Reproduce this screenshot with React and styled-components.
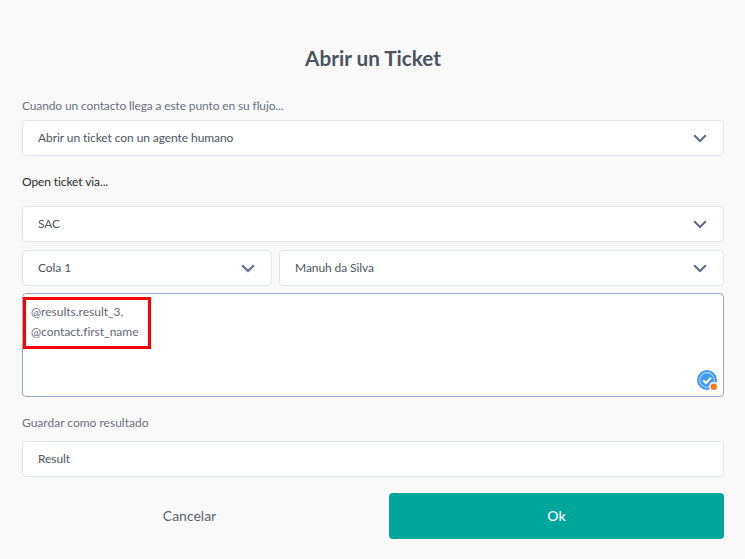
import React from 'react';
import styled, {createGlobalStyle} from 'styled-components';

const GlobalStyle = createGlobalStyle`
  html, body {
    margin: 0;
    background: #f9f9f9;
    font-family: Lato, "Liberation Sans", sans-serif;
    font-variant-ligatures: none;
  }
`;

function Chevron() {
  return (
    <ChevronIcon width="14" height="9" viewBox="0 0 14 9">
      <path d="M1.2 1.2 L7 7 L12.8 1.2" fill="none" stroke="#5f6b8a" strokeWidth="2.1" />
    </ChevronIcon>
  );
}

function Select({value, width}) {
  return (
    <Box $width={width}>
      <BoxText>{value}</BoxText>
      <Chevron />
    </Box>
  );
}

function CheckBadge() {
  return (
    <Badge width="22" height="22" viewBox="0 0 22 22">
      <circle cx="11" cy="11" r="10" fill="#3f9af0" />
      <circle cx="11" cy="11" r="7.4" fill="none" stroke="#a9d3fa" strokeWidth="1.1" />
      <path d="M7.2 11.2 L10 14 L15 8.6" fill="none" stroke="#fff" strokeWidth="2" />
      <circle cx="17.5" cy="17.5" r="4.4" fill="#fff" />
      <circle cx="17.8" cy="17.8" r="3.2" fill="#f5791f" />
    </Badge>
  );
}

export default function App() {
  return (
    <Page>
      <GlobalStyle />
      <Title>Abrir un Ticket</Title>

      <FieldLabel>Cuando un contacto llega a este punto en su flujo...</FieldLabel>
      <Select value="Abrir un ticket con un agente humano" />

      <ViaLabel>Open ticket via...</ViaLabel>
      <Select value="SAC" />
      <Row>
        <Select value="Cola 1" width="250px" />
        <Select value="Manuh da Silva" />
      </Row>
      <MessageBox>
        <Message>
          @results.result_3,
          <br />
          @contact.first_name
        </Message>
        <Highlight />
        <CheckBadge />
      </MessageBox>

      <ResultLabel>Guardar como resultado</ResultLabel>
      <Box>
        <BoxText>Result</BoxText>
      </Box>

      <Footer>
        <CancelButton>Cancelar</CancelButton>
        <OkButton>Ok</OkButton>
      </Footer>
    </Page>
  );
}

const Page = styled.div`
  width: 745px;
  height: 559px;
  box-sizing: border-box;
  padding: 46px 21px 0 22px;
  overflow: hidden;
`;

const Title = styled.h1`
  margin: 0;
  height: 25px;
  line-height: 25px;
  font-size: 20.7px;
  font-weight: 700;
  text-align: center;
  color: #4a5460;
`;

const FieldLabel = styled.div`
  margin-top: 26px;
  height: 23px;
  line-height: 17px;
  font-size: 12px;
  letter-spacing: -0.13px;
  color: #6b7280;
`;

const ViaLabel = styled.div`
  margin-top: 18px;
  height: 32px;
  line-height: 16px;
  font-size: 12px;
  letter-spacing: -0.1px;
  color: #2a2a2a;
`;

const ResultLabel = styled.div`
  margin-top: 17px;
  height: 27px;
  line-height: 18px;
  font-size: 12px;
  color: #6b7280;
`;

const Row = styled.div`
  display: flex;
  gap: 7px;
  margin: 8px 0 7px;
`;

const Box = styled.div`
  display: flex;
  align-items: center;
  justify-content: space-between;
  box-sizing: border-box;
  flex: ${p => (p.$width ? `0 0 ${p.$width}` : '1 1 auto')};
  height: 36px;
  padding: 0 16px 0 15px;
  background: #fff;
  border: 1px solid #e2e6ef;
  border-radius: 4px;
  font-size: 12px;
  letter-spacing: -0.08px;
  color: #4d5562;
`;

const BoxText = styled.span`
  line-height: 16px;
  padding-bottom: 1px;
`;

const ChevronIcon = styled.svg`
  display: block;
`;

const MessageBox = styled.div`
  position: relative;
  box-sizing: border-box;
  height: 104px;
  padding: 8px;
  background: #fff;
  border: 1px solid #9aa9cb;
  border-radius: 4px;
`;

const Message = styled.div`
  font-size: 12px;
  line-height: 20px;
  color: #5f6875;
`;

const Highlight = styled.div`
  position: absolute;
  left: 0;
  top: 3px;
  width: 128px;
  height: 52px;
  box-sizing: border-box;
  border: 3px solid #ff0000;
`;

const Badge = styled.svg`
  position: absolute;
  right: 5px;
  bottom: 5px;
`;

const Footer = styled.div`
  display: flex;
  margin-top: 16px;
  height: 46px;
`;

const CancelButton = styled.div`
  flex: 0 0 335px;
  display: flex;
  align-items: center;
  justify-content: center;
  padding-bottom: 1px;
  font-size: 14px;
  color: #5b6470;
`;

const OkButton = styled.div`
  flex: 0 0 335px;
  margin-left: auto;
  display: flex;
  align-items: center;
  justify-content: center;
  padding-bottom: 1px;
  background: #00a69c;
  border-radius: 4px;
  font-size: 14px;
  font-weight: 500;
  color: #fff;
`;
